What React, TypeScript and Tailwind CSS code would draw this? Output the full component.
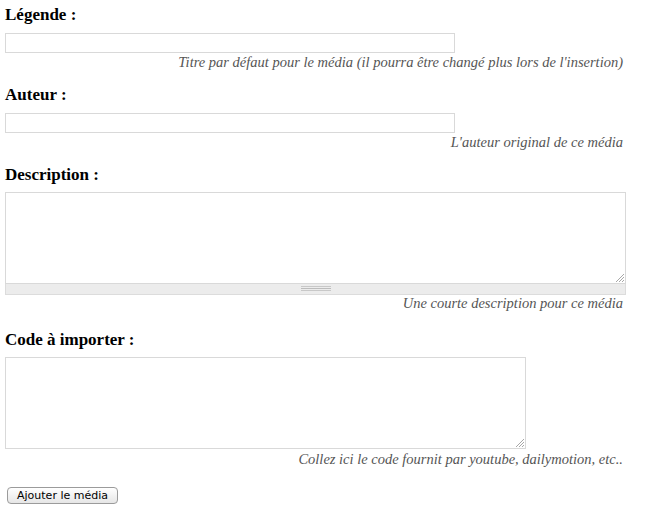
export default function App() {
  return (
    <div className="w-[661px] h-[505px] bg-white text-black font-['Liberation_Serif',serif]">
      <form className="w-[621px] ml-[5px] pt-[6px]">
        <label className="block text-[17px] leading-[18px] font-bold">Légende :</label>
        <input type="text" className="block mt-[9px] w-[450px] h-[20px] border border-[#d9d9d9] bg-white outline-none" />
        <p className="mt-[1px] pr-[3px] text-right italic text-[14.5px] leading-[16px] text-[#555]">
          Titre par défaut pour le média (il pourra être changé plus lors de l'insertion)
        </p>

        <label className="block mt-[16px] text-[17px] leading-[18px] font-bold">Auteur :</label>
        <input type="text" className="block mt-[9px] w-[450px] h-[20px] border border-[#d9d9d9] bg-white outline-none" />
        <p className="mt-[1px] pr-[3px] text-right italic text-[14.5px] leading-[16px] text-[#555]">
          L'auteur original de ce média
        </p>

        <label className="block mt-[16px] text-[17px] leading-[18px] font-bold">Description :</label>
        <div className="mt-[8px] w-[621px]">
          <div className="relative">
            <textarea className="block w-[621px] h-[92px] border border-[#d9d9d9] bg-white resize-none outline-none" />
            <Resizer />
          </div>
          <div className="flex justify-center items-center h-[11px] bg-[#ececec] border border-t-0 border-[#dcdcdc]">
            <svg width="30" height="6" viewBox="0 0 30 6">
              <rect x="0" y="0" width="30" height="1" fill="#c8c8c8" />
              <rect x="0" y="2" width="30" height="1" fill="#bcbcbc" />
              <rect x="0" y="4" width="30" height="1" fill="#c8c8c8" />
            </svg>
          </div>
        </div>
        <p className="pr-[3px] text-right italic text-[14.5px] leading-[16px] text-[#555]">
          Une courte description pour ce média
        </p>

        <label className="block mt-[20px] text-[17px] leading-[18px] font-bold">Code à importer :</label>
        <div className="relative mt-[8px] w-[521px]">
          <textarea className="block w-[521px] h-[92px] border border-[#d9d9d9] bg-white resize-none outline-none" />
          <Resizer />
        </div>
        <p className="mt-[2px] pr-[3px] text-right italic text-[14.5px] leading-[16px] text-[#555]">
          Collez ici le code fournit par youtube, dailymotion, etc..
        </p>

        <button
          type="button"
          className="block mt-[20px] ml-[2px] w-[111px] h-[17px] rounded-[4px] border border-[#9b9b9b] bg-gradient-to-b from-white to-[#e6e6e6] font-['DejaVu_Sans',sans-serif] text-[11px] leading-[15px] text-black"
        >
          Ajouter le média
        </button>
      </form>
    </div>
  );
}

function Resizer() {
  return (
    <svg className="absolute right-[2px] bottom-[2px]" width="9" height="9" viewBox="0 0 9 9">
      <line x1="1" y1="9" x2="9" y2="1" stroke="#a8a8a8" strokeWidth="1" />
      <line x1="4" y1="9" x2="9" y2="4" stroke="#a8a8a8" strokeWidth="1" />
      <line x1="7" y1="9" x2="9" y2="7" stroke="#a8a8a8" strokeWidth="1" />
    </svg>
  );
}
